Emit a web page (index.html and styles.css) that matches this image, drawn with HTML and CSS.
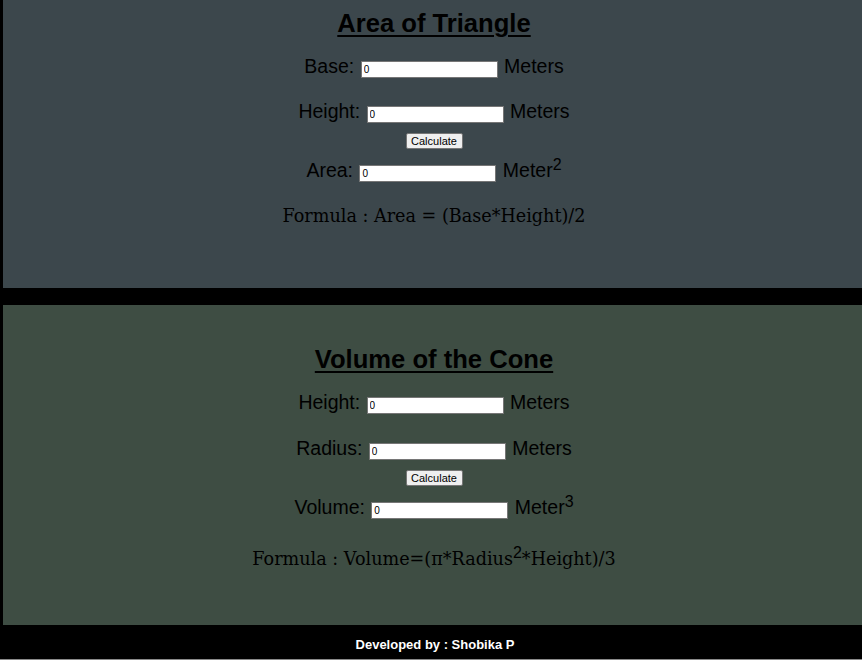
FILE: index.html
```html
<!DOCTYPE html>
<html>
<head>
<meta charset="utf-8">
<link rel="stylesheet" href="styles.css">
</head>
<body>
<div class="page">
  <section class="panel panel-tri">
    <h2 class="title">Area of Triangle</h2>
    <div class="row row-first"><span class="lbl">Base:&nbsp;</span><input class="num" type="text" value="0"><span class="lbl">&nbsp;Meters</span></div>
    <div class="row row-next"><span class="lbl">Height:&nbsp;</span><input class="num" type="text" value="0"><span class="lbl">&nbsp;Meters</span></div>
    <div class="btn-row"><button class="calc">Calculate</button></div>
    <div class="row row-result"><span class="lbl">Area:&nbsp;</span><input class="num" type="text" value="0"><span class="lbl">&nbsp;Meter<sup class="sup">2</sup></span></div>
    <p class="formula">Formula : Area = (Base*Height)/2</p>
  </section>
  <section class="panel panel-cone">
    <h2 class="title">Volume of the Cone</h2>
    <div class="row row-first"><span class="lbl">Height:&nbsp;</span><input class="num" type="text" value="0"><span class="lbl">&nbsp;Meters</span></div>
    <div class="row row-next"><span class="lbl">Radius:&nbsp;</span><input class="num" type="text" value="0"><span class="lbl">&nbsp;Meters</span></div>
    <div class="btn-row"><button class="calc">Calculate</button></div>
    <div class="row row-result"><span class="lbl">Volume:&nbsp;</span><input class="num" type="text" value="0"><span class="lbl">&nbsp;Meter<sup class="sup">3</sup></span></div>
    <p class="formula formula-cone">Formula : Volume=(π*Radius<sup class="sup">2</sup>*Height)/3</p>
  </section>
  <footer class="footer">Developed by : Shobika P</footer>
</div>
</body>
</html>
```
FILE: styles.css
```css
html, body {
  margin: 0;
  padding: 0;
  background: #000;
}
body {
  font-family: "Liberation Sans", Arial, sans-serif;
  color: #000;
}
.page {
  display: flex;
  flex-direction: column;
  height: 659px;
  border-bottom: 1px solid #8a8a8a;
}
.panel {
  margin-left: 3px;
  padding-left: 3px;
  display: flex;
  flex-direction: column;
  align-items: center;
  box-sizing: border-box;
}
.panel-tri {
  background: #3c474c;
  height: 288px;
  padding-top: 8px;
}
.panel-cone {
  background: #3e4d43;
  height: 320px;
  margin-top: 17px;
  padding-top: 39px;
}
.title {
  margin: 0;
  font-size: 25.6px;
  line-height: 30px;
  font-weight: bold;
  text-decoration: underline;
  text-decoration-thickness: 2px;
  text-underline-offset: 3px;
}
.row {
  display: flex;
  align-items: baseline;
  font-size: 19.5px;
  line-height: 23px;
  height: 23px;
}
.row-first { margin-top: 17px; }
.row-next { margin-top: 22px; }
.panel-cone .row-next { margin-top: 23px; }
.row-result { margin-top: 10px; }
.lbl { white-space: pre; }
.sup {
  font-family: "Liberation Sans", Arial, sans-serif;
  font-size: 16px;
  line-height: 0;
  vertical-align: 7px;
}
.num {
  box-sizing: border-box;
  width: 137px;
  height: 17px;
  margin: 0 1px;
  padding: 1px 2px;
  border: 1px solid #767676;
  background: #fff;
  font-family: "Liberation Sans", Arial, sans-serif;
  font-size: 10px;
  color: #000;
}
.btn-row {
  margin-top: 10px;
  display: flex;
  justify-content: center;
}
.calc {
  box-sizing: border-box;
  width: 57px;
  height: 16px;
  padding: 0;
  border: 1px solid #767676;
  border-radius: 2px;
  background: #efefef;
  font-family: "Liberation Sans", Arial, sans-serif;
  font-size: 11px;
  line-height: 14px;
  color: #000;
}
.formula {
  margin: 22px 0 0;
  font-family: "DejaVu Serif", Georgia, serif;
  font-size: 17.6px;
  line-height: 24px;
  color: #000;
}
.formula-cone {
  margin-top: 28px;
}
.footer {
  flex: 1;
  background: #000;
  color: #fff;
  font-weight: bold;
  font-size: 13px;
  text-align: center;
  padding-left: 8px;
  padding-top: 12px;
  box-sizing: border-box;
}
```
